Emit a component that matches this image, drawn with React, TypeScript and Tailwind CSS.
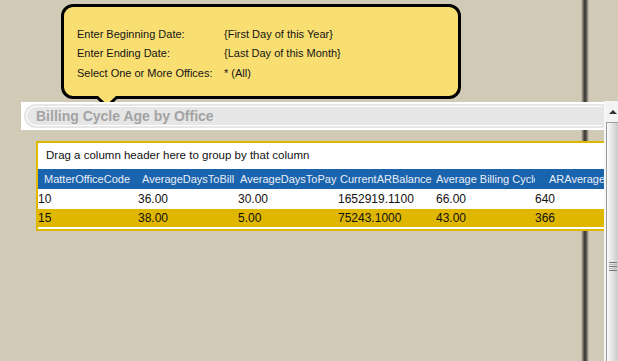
const prompts = [
  { label: "Enter Beginning Date:", value: "{First Day of this Year}" },
  { label: "Enter Ending Date:", value: "{Last Day of this Month}" },
  { label: "Select One or More Offices:", value: "* (All)" },
];

const columns = [
  { title: "MatterOfficeCode", width: 100, pad: 6 },
  { title: "AverageDaysToBill", width: 100, pad: 4 },
  { title: "AverageDaysToPay", width: 100, pad: 2 },
  { title: "CurrentARBalance", width: 98, pad: 2 },
  { title: "Average Billing Cycle", width: 99, pad: 0 },
  { title: "ARAverageAge", width: 100, pad: 14 },
];

const rows = [
  ["10", "36.00", "30.00", "1652919.1100", "66.00", "640"],
  ["15", "38.00", "5.00", "75243.1000", "43.00", "366"],
];

function Callout() {
  return (
    <div className="relative ml-[61px] mt-[4px] h-[95px] w-[400px] rounded-[12px] border-[3px] border-black bg-[#f9de71] pl-[13px] pt-[17px] text-[11px] text-[#151515]">
      {prompts.map((p) => (
        <div key={p.label} className="flex h-[19.5px] items-center">
          <div className="w-[147px]">{p.label}</div>
          <div>{p.value}</div>
        </div>
      ))}
      <svg className="absolute left-[30px] top-[89px] z-20" width="26" height="16" viewBox="0 0 26 16">
        <polygon points="0,0 26,0 13,13" fill="#000" />
        <polygon points="4,0 22,0 13,8.5" fill="#f9de71" />
      </svg>
    </div>
  );
}

function TitleBar() {
  return (
    <div className="relative z-10 ml-[21px] bg-white py-[2px] pl-[3px]">
      <div className="h-[24px] rounded-l-full bg-[#e6e6e6] p-[2px]">
        <div className="flex h-full items-center rounded-l-full border border-r-0 border-white bg-[#e6e6e6] pl-[9px] text-[14px] font-bold text-[#a3a3a3]">
          Billing Cycle Age by Office
        </div>
      </div>
    </div>
  );
}

function Grid() {
  return (
    <div className="relative z-10 ml-[36px] mt-[11px] w-[600px] border-2 border-[#e0b800] bg-white pb-[2px]">
      <div className="flex h-[26px] items-center pl-[8px] text-[11.5px] text-[#111]">
        Drag a column header here to group by that column
      </div>
      <div className="flex h-[20px] items-center bg-[#1a63ad] text-[11px] text-[#e9eff8]">
        {columns.map((c) => (
          <div
            key={c.title}
            className="shrink-0 overflow-hidden whitespace-nowrap"
            style={{ width: c.width, paddingLeft: c.pad }}
          >
            {c.title}
          </div>
        ))}
      </div>
      {rows.map((r, i) => (
        <div
          key={r[0]}
          className={`flex items-center text-[12px] text-[#111] ${i === 1 ? "h-[18px] bg-[#dfb700]" : "h-[20px] bg-white"}`}
        >
          {r.map((v, j) => (
            <div key={j} className="shrink-0 whitespace-nowrap" style={{ width: columns[j].width }}>
              {v}
            </div>
          ))}
        </div>
      ))}
    </div>
  );
}

function ScrollBar() {
  return (
    <div className="flex w-[14px] shrink-0 flex-col border-l-2 border-[#f6f6f6] bg-[#f3f3f3]">
      <div className="flex h-[21px] items-center justify-center">
        <div className="ml-[2px] h-0 w-0 border-x-[4px] border-b-[4px] border-x-transparent border-b-[#333]" />
      </div>
      <div className="flex flex-1 flex-col items-center border-l border-t border-[#9c9c9c] bg-[linear-gradient(to_right,#fbfbfb,#e4e4e4_50%,#c9c9c9)] pt-[139px]">
        <div className="flex w-[8px] flex-col gap-[1px]">
          <div className="h-[1px] bg-[#777]" />
          <div className="h-[1px] bg-[#bbb]" />
          <div className="h-[1px] bg-[#777]" />
          <div className="h-[1px] bg-[#bbb]" />
          <div className="h-[1px] bg-[#777]" />
        </div>
      </div>
    </div>
  );
}

export default function App() {
  return (
    <div
      className="relative flex h-[361px] w-[618px] flex-col overflow-hidden bg-[#d1cab6]"
      style={{ fontFamily: '"Liberation Sans", Arial, sans-serif' }}
    >
      <div className="absolute left-[581px] top-0 h-full w-[8px] bg-[linear-gradient(to_right,transparent,#6b665c_30%,#2f2f2f_50%,#6b665c_70%,transparent)]" />
      <div className="relative z-10 h-[101px] shrink-0">
        <Callout />
      </div>
      <div className="flex min-h-0 flex-1">
        <div className="min-w-0 flex-1 overflow-hidden pt-[1px]">
          <TitleBar />
          <Grid />
        </div>
        <ScrollBar />
      </div>
    </div>
  );
}
